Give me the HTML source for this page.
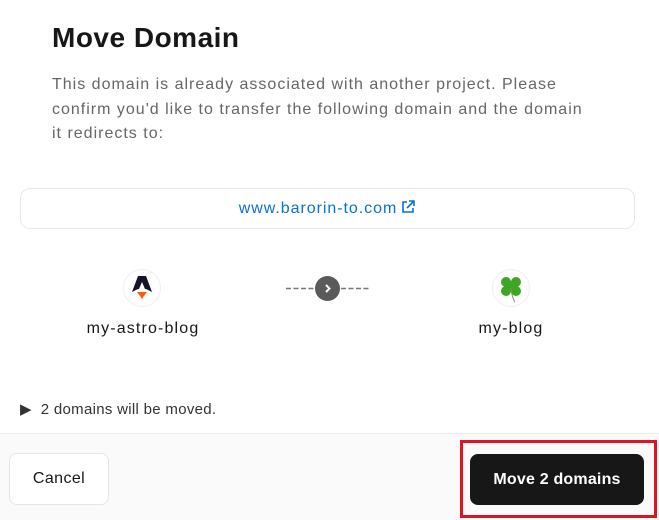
<!DOCTYPE html>
<html><head><style>
*{margin:0;padding:0;box-sizing:border-box}
body{width:659px;height:520px;background:#fff;font-family:"Liberation Sans",sans-serif;position:relative;overflow:hidden;color:#171717}
.abs{position:absolute}
h1{position:absolute;left:52px;top:22px;font-size:28px;font-weight:bold;letter-spacing:0.5px}
.p{left:52px;top:73px;font-size:16px;line-height:24.5px;color:#666;white-space:nowrap;letter-spacing:1.0px}
.box{left:20px;top:188px;width:615px;height:41px;border:1px solid #e8e8e8;border-radius:10px;text-align:center;font-size:16px;line-height:39px;color:#0a6fdc;letter-spacing:0.95px}
.ic{width:38px;height:38px;border-radius:50%;border:1px solid #eee;background:#fff}
.lbl{font-size:16px;width:200px;text-align:center;letter-spacing:1.15px}
.foot{left:0;top:433px;width:659px;height:87px;background:#fafafa;border-top:1px solid #ebebeb}
</style></head><body>
<h1>Move Domain</h1>
<div class="abs p">This domain is already associated with another project. Please<br>confirm you'd like to transfer the following domain and the domain<br>it redirects to:</div>
<div class="abs box">www.barorin-to.com<svg width="16" height="16" viewBox="0 0 16 16" style="vertical-align:-2px;margin-left:3px" fill="none" stroke="#0a6fdc" stroke-width="1.6"><path d="M7 3H3v10h10V9M9 2h5v5M14 2L7 9"/></svg></div>
<div class="abs ic" style="left:123px;top:269px"><svg width="36" height="36" viewBox="0 0 36 36"><path d="M14 6h8l6 16-6-3h-8l-6 3z" fill="#17132a"/><path d="M18 12l-3 7h6z" fill="#fff"/><path d="M13 22h10l-3 4-2 3-2-3z" fill="#ff5d01"/></svg></div>
<div class="abs lbl" style="left:43px;top:320px">my-astro-blog</div>
<svg class="abs" style="left:286px;top:287px" width="84" height="3"><path d="M0 1.5H29M55 1.5H84" stroke="#777" stroke-width="1.5" stroke-dasharray="5 2.5"/></svg>
<div class="abs" style="left:315px;top:276px;width:25px;height:25px;border-radius:50%;background:#5a5a5a"><svg width="25" height="25" viewBox="0 0 25 25"><path d="M11 9l3.5 3.5L11 16" stroke="#fff" stroke-width="2" fill="none"/></svg></div>
<div class="abs ic" style="left:492px;top:269px"><svg width="36" height="36" viewBox="0 0 36 36" fill="#3fa524"><circle cx="13" cy="12" r="5"/><circle cx="23" cy="12" r="5"/><circle cx="13" cy="21" r="5"/><circle cx="23" cy="21" r="5"/><circle cx="18" cy="16" r="5"/><path d="M18 18q1 10 4 14" stroke="#8a8a6a" fill="none"/></svg></div>
<div class="abs lbl" style="left:411px;top:320px">my-blog</div>
<div class="abs" style="left:20px;top:400px;font-size:15px;color:#333;letter-spacing:0.3px">▶&nbsp; 2 domains will be moved.</div>
<div class="abs foot"></div>
<div class="abs" style="left:9px;top:453px;width:100px;height:52px;border:1px solid #e5e5e5;border-radius:8px;background:#fff;text-align:center;line-height:50px;font-size:16px;letter-spacing:0.4px">Cancel</div>
<div class="abs" style="left:460px;top:440px;width:197px;height:78px;border:3px solid #e0141e"></div>
<div class="abs" style="left:470px;top:454px;width:174px;height:51px;border-radius:8px;background:#171717;color:#fff;text-align:center;line-height:51px;font-size:16px;font-weight:bold;letter-spacing:0.2px">Move 2 domains</div>
</body></html>
